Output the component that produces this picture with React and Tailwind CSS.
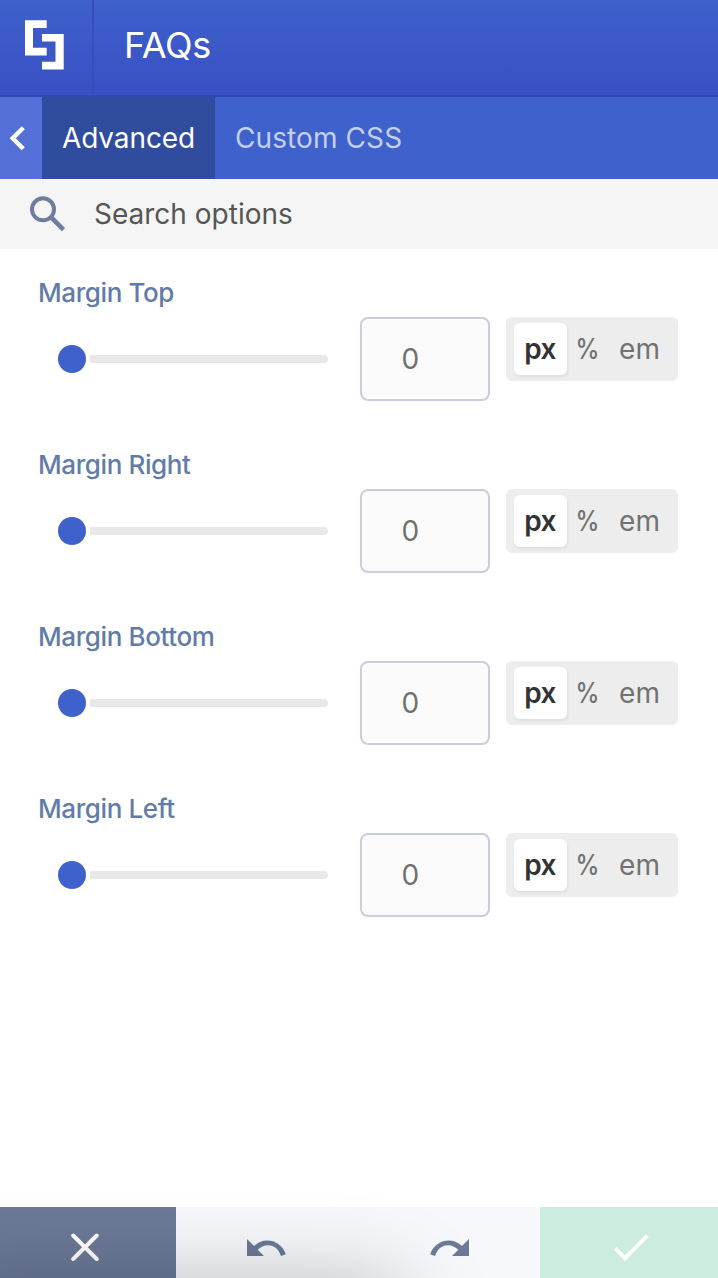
const UNITS = ['%', 'em'];
const MARGINS = ['Margin Top', 'Margin Right', 'Margin Bottom', 'Margin Left'];

function Logo() {
  return (
    <svg className="h-[50px] w-[40px]" viewBox="0 0 40 50" fill="#fff">
      <path d="M1 .3H22.7V8H9V27.8H22.7V35.5H1Z" />
      <path d="M18 14H39.7V49.5H18V41.8H31.5V21.5H18Z" />
    </svg>
  );
}

function OptionRow({ label }) {
  return (
    <section className="h-[172px] px-[38px]">
      <h3 className="h-8 whitespace-nowrap text-[26px] leading-8 font-medium tracking-[-0.4px] text-[#637ba9]">{label}</h3>
      <div className="flex items-start pt-2">
        <div className="mt-7 ml-5 flex w-[270px] items-center gap-1">
          <span className="size-7 rounded-full bg-[#3e61cb]" />
          <span className="h-2 flex-1 rounded-r-full bg-[#e8e8e8]" />
        </div>
        <div className="ml-8 flex h-[84px] w-[130px] items-center rounded-lg border-2 border-[#cacde0] bg-[#fbfbfb] pl-[39.5px] text-[28px] text-[#707070]">0</div>
        <div className="ml-4 flex h-16 w-[172px] items-center rounded-md bg-[#ededed] pl-2 text-[28px] text-[#727272]">
          <span className="flex h-[52px] w-[53px] items-center justify-center rounded-md bg-white pr-px font-semibold tracking-[-0.6px] text-[#333] shadow-[1px_2px_3px_rgba(0,0,0,0.06)]">px</span>
          <span className="w-[41px] scale-x-[0.86] text-center font-medium">{UNITS[0]}</span>
          <span className="ml-[11px] tracking-[0.2px]">{UNITS[1]}</span>
        </div>
      </div>
    </section>
  );
}

export default function App() {
  return (
    <div className="relative flex h-[1278px] w-[718px] flex-col overflow-hidden bg-white font-[Inter,sans-serif]">
      <header className="flex h-[97px] border-b-2 border-[#3048b4] bg-linear-to-b from-[#3e61cb] to-[#394fc3] text-white">
        <div className="flex w-[94px] justify-center border-r-2 border-[#344ebb] pt-5 pr-1">
          <Logo />
        </div>
        <h1 className="pl-[30px] text-[36px] leading-[90px] tracking-[-0.3px]">FAQs</h1>
      </header>
      <nav className="flex h-[82px] bg-[#3e61cb] text-[28px] leading-[82px] whitespace-nowrap">
        <button className="flex w-[42px] items-center bg-[#556fd8] pl-[9px]">
          <svg className="h-6 w-4" viewBox="0 0 16 24" fill="none" stroke="#fff" strokeWidth="4.4">
            <path d="M14.3 1.8L3.7 12.3L14.3 22.7" />
          </svg>
        </button>
        <span className="w-[173px] bg-[#304c9e] text-center tracking-[-0.1px] text-white">Advanced</span>
        <span className="pl-5 tracking-[0.1px] text-[#c5cff0]">Custom CSS</span>
      </nav>
      <div className="flex h-[70px] items-center bg-[#f5f5f5] text-[28px] text-[#555]">
        <svg className="ml-[29px] h-9 w-9" viewBox="0 0 36 36" fill="none" stroke="#6e7d9f" strokeWidth="4">
          <circle cx="14" cy="13.3" r="11" />
          <path d="M22.5 21.7L34.5 33.7" strokeWidth="4.7" />
        </svg>
        <span className="ml-[29px] whitespace-nowrap">Search options</span>
      </div>
      <main className="flex-1 pt-7">
        {MARGINS.map((label) => <OptionRow key={label} label={label} />)}
      </main>
      <footer className="flex h-[71px]">
        <button className="flex w-44 justify-center bg-[#6c7a98] pt-[26px] pr-[6px]">
          <svg className="size-7" viewBox="0 0 28 28" fill="none" stroke="#fff" strokeWidth="4" strokeLinecap="round">
            <path d="M2.2 2.5L25.7 26M25.7 2.5L2.2 26" />
          </svg>
        </button>
        <div className="flex w-[364px] bg-[#f6f8fc] pt-8 pl-[70px]">
          <svg className="h-[18px] w-10" viewBox="0 0 40 18">
            <path d="M1 0V17H18L11.7 10.8C18 3.8 31 3.8 35 17L39.8 15.3C35 0 16.7-2.5 8.1 7Z" fill="#6c7a98" />
          </svg>
          <svg className="ml-[144px] h-[18px] w-10" viewBox="0 0 40 18">
            <path transform="matrix(-1 0 0 1 40 0)" d="M1 0V17H18L11.7 10.8C18 3.8 31 3.8 35 17L39.8 15.3C35 0 16.7-2.5 8.1 7Z" fill="#6c7a98" />
          </svg>
        </div>
        <button className="flex flex-1 bg-[#cbecdf] pt-[27px] pl-[73px]">
          <svg className="h-7 w-9" viewBox="0 0 36 28" fill="none" stroke="#fff" strokeWidth="4">
            <path d="M2.2 14.4L12 24.2L34.5 1.7" />
          </svg>
        </button>
      </footer>
      <div className="pointer-events-none absolute top-[1287px] left-[-60px] h-24 w-[460px] shadow-[0_0_90px_rgba(0,0,0,0.28)]" />
    </div>
  );
}
